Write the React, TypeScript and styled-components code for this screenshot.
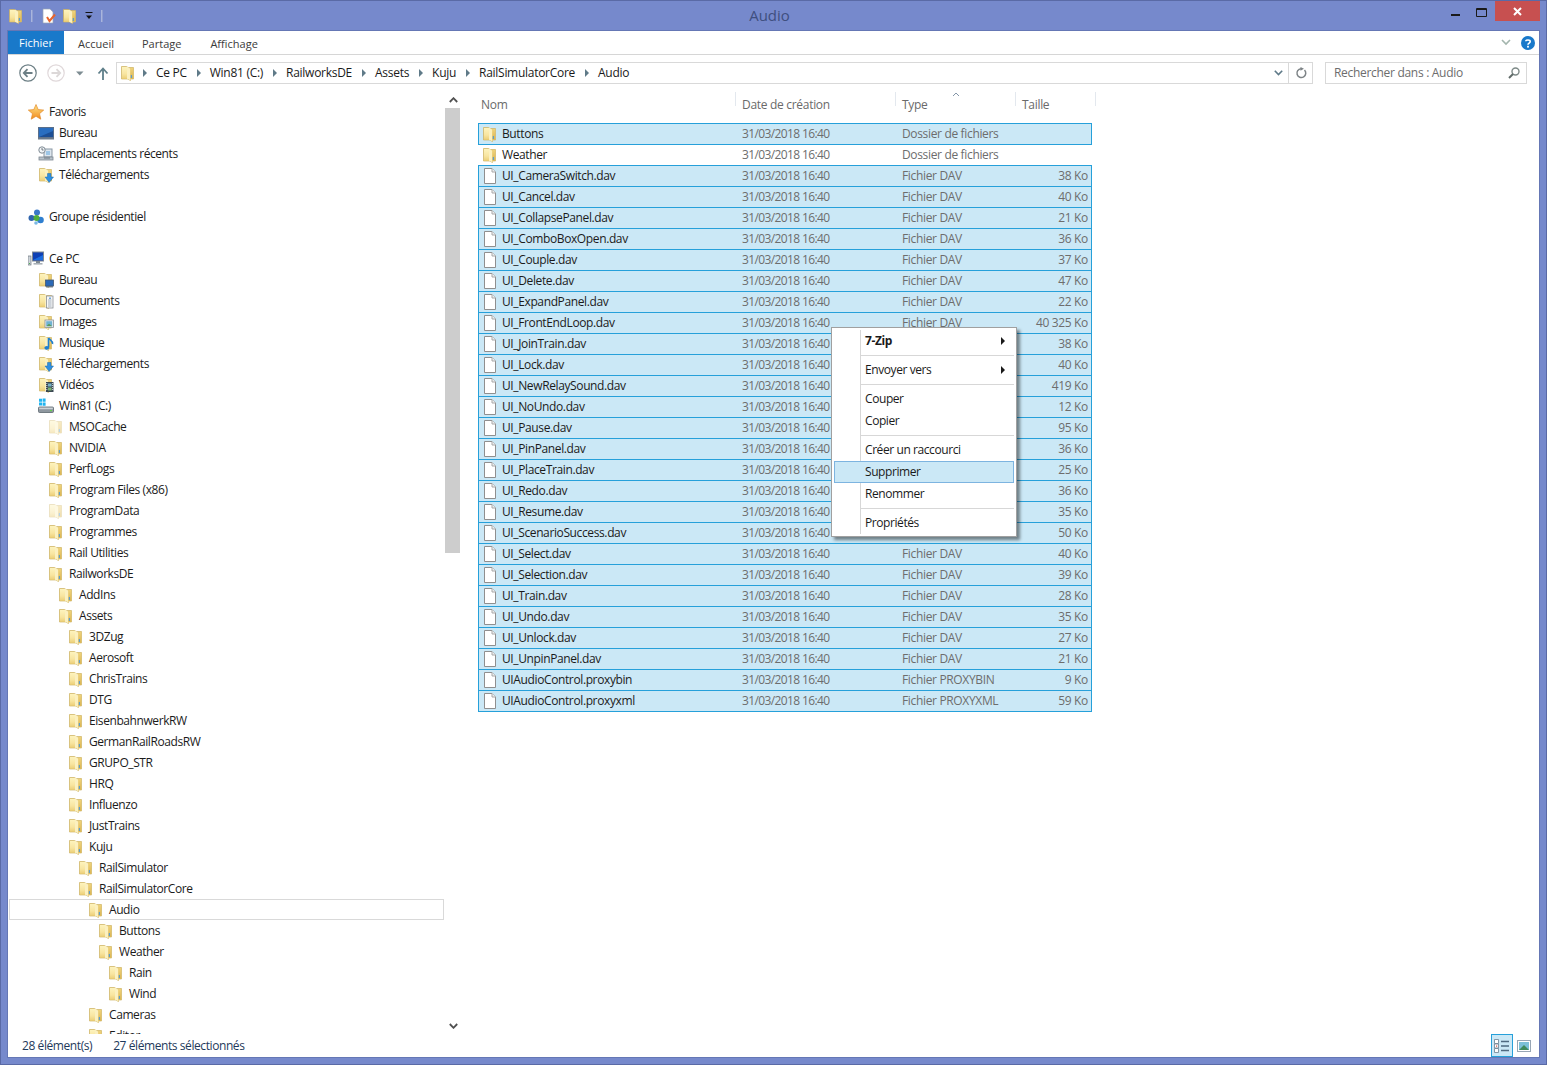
import React from "react";
import styled, { createGlobalStyle } from "styled-components";

const Global = createGlobalStyle`
  html, body { margin: 0; padding: 0; background: #7689cc; }
  body { font-family: "Open Sans", "Noto Sans", "Liberation Sans", sans-serif; font-size: 12px; letter-spacing: -0.42px; }
  * { box-sizing: border-box; }
`;

const Frame = styled.div`
  position: relative; width: 1547px; height: 1065px; background: #7689cc;
  border: 1px solid #5a6aa6; padding: 0 6px 6px; display: flex; flex-direction: column; overflow: hidden;
`;
const TitleBar = styled.div`
  position: relative; height: 29px; flex: none; display: flex; align-items: flex-start; padding-left: 1px;
`;
const Qat = styled.div`display: flex; align-items: center; height: 29px;`;
const QatSep = styled.span<{ $l: number; $r: number }>`
  width: 2px; height: 12px; background: #a9b5dd; border-right: 1px solid #8f9dd0;
  margin: 0 ${p => p.$r}px 0 ${p => p.$l}px;
`;
const QatGap = styled.span`width: 5px;`;
const QatDrop = styled.svg`margin-left: 6px;`;
const TitleText = styled.div`
  position: absolute; left: 0; right: 0; top: 4px; text-align: center; font-size: 15px; line-height: 20px;
  color: #3f4f7f; letter-spacing: 0; transform: translateX(-4px);
`;
const WinButtons = styled.div`
  position: absolute; right: 0; top: 0; display: flex; align-items: flex-start;
`;
const WinBtn = styled.div<{ $w: number; $close?: boolean }>`
  width: ${p => p.$w}px; height: 20px; display: flex; align-items: center; justify-content: center;
  background: ${p => (p.$close ? "#c75050" : "transparent")};
`;
const MinGlyph = styled.svg`margin-top: 7px; margin-right: 1px;`;
const MaxGlyph = styled.svg`margin-top: 2px; margin-right: 2px;`;

const Inner = styled.div`
  flex: 1; min-height: 0; display: flex; flex-direction: column; background: #fff; border: 1px solid #6577b5;
`;
const Ribbon = styled.div`
  height: 24px; flex: none; display: flex; align-items: stretch; border-bottom: 1px solid #d6d6d6; position: relative;
`;
const FileTab = styled.div`
  width: 56px; height: 23px; background: #1979ca; color: #fff; display: flex; align-items: center; justify-content: center;
  font-size: 11px; letter-spacing: 0;
`;
const RibbonTab = styled.div<{ $ml: number }>`
  margin-left: ${p => p.$ml}px; display: flex; align-items: center; color: #3b3b3b; font-size: 11px; letter-spacing: 0; padding-top: 1px;
`;
const RibbonRight = styled.div`
  margin-left: auto; display: flex; align-items: center; gap: 10px; padding-right: 4px; height: 23px;
`;

const AddressRow = styled.div`
  height: 37px; flex: none; display: flex; align-items: flex-start; padding: 7px 12px 0 0;
`;
const Nav = styled.div`
  width: 108px; height: 22px; flex: none; display: flex; align-items: center; padding-left: 11px;
`;
const NavSlot = styled.span<{ $w: number; $ml: number }>`
  width: ${p => p.$w}px; margin-left: ${p => p.$ml}px; display: flex; justify-content: center;
`;
const AddressBox = styled.div`
  flex: 1; height: 22px; border: 1px solid #d9d9d9; display: flex; align-items: center; padding-left: 3px; color: #1a1a1a;
`;
const Crumbs = styled.div`flex: 1; display: flex; align-items: center; min-width: 0; letter-spacing: -0.28px;
  & > svg { margin-right: -3px; }
`;
const Crumb = styled.span`line-height: 20px; white-space: nowrap;`;
const CrumbArrow = styled.span`
  width: 0; height: 0; border-left: 4px solid #5f7a88; border-top: 4px solid transparent; border-bottom: 4px solid transparent;
  margin: 0 9px 0 10px; flex: none;
`;
const AddrChevron = styled.div`width: 19px; height: 20px; display: flex; align-items: center; justify-content: center;`;
const Refresh = styled.div`
  width: 24px; height: 20px; border-left: 1px solid #d9d9d9; display: flex; align-items: center; justify-content: center;
`;
const SearchBox = styled.div`
  width: 202px; height: 22px; margin-left: 12px; border: 1px solid #d9d9d9; display: flex; align-items: center;
  justify-content: space-between; padding: 0 6px 1px 8px; color: #6d6d6d; letter-spacing: -0.3px;
`;

const Main = styled.div`flex: 1; min-height: 0; display: flex;`;
const Sidebar = styled.div`width: 453px; flex: none; display: flex;`;
const Tree = styled.div`
  width: 437px; flex: none; padding: 9px 1px 0; overflow: hidden;
`;
const TreeRow = styled.div<{ $depth: number; $active?: boolean }>`
  height: 21px; display: flex; align-items: center; gap: 5px; padding-left: ${p => 19 + p.$depth * 10}px;
  white-space: nowrap; color: #1b1b1b; border: 1px solid ${p => (p.$active ? "#d9d9d9" : "transparent")};
  & > svg { flex: none; margin-left: -1px; }
`;
const Scrollbar = styled.div`
  width: 16px; flex: none; display: flex; flex-direction: column; align-items: stretch;
`;
const ScrollBtn = styled.div`height: 16px; flex: none; display: flex; align-items: center; justify-content: center;`;
const ScrollThumb = styled.div`height: 445px; flex: none; background: #cdcdcd; width: 15px;`;
const ScrollTrack = styled.div`flex: 1;`;

const ListPane = styled.div`flex: 1; min-width: 0; padding-left: 17px;`;
const Header = styled.div`height: 31px; display: flex; color: #6a6a6a; letter-spacing: -0.3px;`;
const HeaderCell = styled.div<{ $w: number; $pl: number }>`
  position: relative; width: ${p => p.$w}px; padding: 5px 0 0 ${p => p.$pl}px; line-height: 16px;
  &::after { content: ""; position: absolute; right: 0; top: 0; width: 1px; height: 14px; background: #e3e8ee; }
`;
const SortMark = styled.svg`position: absolute; left: 56px; top: 0;`;
const FileRow = styled.div<{ $selected: boolean }>`
  width: 614px; height: 22px; margin-bottom: -1px; display: grid; grid-template-columns: 263px 160px 120px 1fr;
  align-items: center; padding-right: 3px;
  border: 1px solid ${p => (p.$selected ? "#26a0da" : "transparent")};
  background: ${p => (p.$selected ? "#cbe8f6" : "transparent")};
`;
const NameCell = styled.div`
  display: flex; align-items: center; gap: 4px; padding-left: 3px; color: #1b1b1b; white-space: nowrap; letter-spacing: -0.38px;
  & > span { margin-top: -1px; }
`;
const MetaCell = styled.div<{ $right?: boolean; $date?: boolean }>`
  color: #6d6d6d; white-space: nowrap; text-align: ${p => (p.$right ? "right" : "left")}; margin-top: -1px;
  letter-spacing: ${p => (p.$date ? "-0.62px" : "-0.34px")};
`;

const Status = styled.div`
  height: 23px; flex: none; display: flex; align-items: center; padding: 0 8px 0 14px; color: #1e395b;
`;
const StatusText = styled.span<{ $ml?: number }>`margin-left: ${p => p.$ml ?? 0}px;`;
const StatusViews = styled.div`margin-left: auto; display: flex; align-items: stretch; height: 23px; gap: 4px;`;
const ViewBtn = styled.div<{ $on?: boolean }>`
  width: ${p => (p.$on ? 22 : 14)}px; display: flex; align-items: center; justify-content: center;
  border: ${p => (p.$on ? "1px solid #26a0da" : "none")}; background: ${p => (p.$on ? "#cbe8f6" : "transparent")};
`;

const Menu = styled.div`
  position: absolute; left: 830px; top: 326px; width: 186px; height: 210px; background: #fff; border: 1px solid #a0a0a0;
  padding: 2px; box-shadow: 3px 3px 3px rgba(0,0,0,.45); color: #1a1a1a;
  &::before { content: ""; position: absolute; left: 28px; top: 2px; bottom: 2px; width: 1px; background: #d7d7d7; }
`;
const MenuItem = styled.div<{ $hot?: boolean; $bold?: boolean }>`
  height: 22px; display: flex; align-items: center; justify-content: space-between; padding: 0 8px 1px 30px; position: relative;
  border: 1px solid ${p => (p.$hot ? "#7db4e0" : "transparent")};
  background: ${p => (p.$hot ? "#cbe8f6" : "transparent")};
  font-weight: ${p => (p.$bold ? 700 : 400)};
`;
const MenuSep = styled.div`
  height: 7px; margin-left: 27px; display: flex; align-items: center;
  &::after { content: ""; flex: 1; height: 1px; background: #d7d7d7; }
`;
const SubArrow = styled.span`
  width: 0; height: 0; border-left: 4px solid #1a1a1a; border-top: 4px solid transparent; border-bottom: 4px solid transparent;
`;

type Overlay = "desktop" | "doc" | "image" | "music" | "down" | "video" | undefined;

const Folder = ({ overlay, faded }: { overlay?: Overlay; faded?: boolean }) => (
  <svg width="16" height="16" viewBox="0 0 16 16" opacity={faded ? 0.45 : 1}>
    <defs>
      <linearGradient id="fl" x1="0" y1="0" x2="0" y2="1"><stop offset="0" stopColor="#fdf3bd" /><stop offset=".6" stopColor="#f8e5a0" /><stop offset="1" stopColor="#eccf78" /></linearGradient>
      <linearGradient id="fr" x1="0" y1="0" x2="0" y2="1"><stop offset="0" stopColor="#efd27a" /><stop offset="1" stopColor="#dcb654" /></linearGradient>
    </defs>
    <path d="M1.5 1.5 H6.5 L8 2.5 H13.5 V14 H10.5 V15.5 L7.5 14 H1.5Z" fill="#e6c869" stroke="#cfb569" strokeWidth=".7" />
    <path d="M2 2 H7 V13.7 H2Z" fill="url(#fl)" />
    <path d="M7 1.6 L10.4 3.8 V15.2 L7 13.7Z" fill="#fbf0c0" />
    <path d="M10.4 3 H13.2 V13.7 H10.4Z" fill="url(#fr)" />
    {!overlay && <rect x="10.8" y="10" width="1.1" height="3" fill="#4f9bd6" />}
    {overlay === "desktop" && (<><rect x="7.5" y="8" width="8" height="6" fill="#2b69b7" stroke="#45586e" strokeWidth=".8" /><rect x="8" y="14.2" width="7" height="1.2" fill="#59697a" /></>)}
    {overlay === "doc" && (<><rect x="8.5" y="3" width="6.5" height="12" fill="#f7f7f7" stroke="#8a9096" strokeWidth=".8" /><path d="M10 7h3.5M10 9h3.5M10 11h3.5M10 13h3.5" stroke="#8fa0b0" strokeWidth=".8" /><rect x="11" y="4.5" width="2" height="1.5" fill="#6fa8dc" /></>)}
    {overlay === "image" && (<><rect x="7" y="6" width="8.5" height="7.5" fill="#eef1f3" stroke="#8a9096" strokeWidth=".8" /><rect x="8.2" y="7.2" width="6" height="5" fill="#6fb2d2" /><path d="M8.2 12.2 L11 9.8 L14.2 12.2Z" fill="#5c9a58" /></>)}
    {overlay === "music" && (<path d="M10.5 3 V12 M10.5 3 C12 5 15 6 14.5 9" stroke="#1e7fd0" strokeWidth="1.6" fill="none" />)}
    {overlay === "music" && <ellipse cx="8.8" cy="12.8" rx="2.4" ry="1.9" fill="#1e7fd0" />}
    {overlay === "down" && (<path d="M9.5 6.5 H13 V10 H15.5 L11.2 15.5 L7 10 H9.5Z" fill="#2e8fe0" stroke="#1c6aa8" strokeWidth=".5" />)}
    {overlay === "video" && (<><rect x="8" y="5" width="7.5" height="10" fill="#3b4852" /><rect x="10" y="6.5" width="3.6" height="3" fill="#74b0c8" /><rect x="10" y="10.5" width="3.6" height="3" fill="#7cb174" /><path d="M8.8 6v8M14.7 6v8" stroke="#dfe6ea" strokeWidth="1" strokeDasharray="1 1" /></>)}
  </svg>
);

const PageIcon = () => (
  <svg width="16" height="16" viewBox="0 0 16 16">
    <path d="M2.5 .5 H10 L13.5 4 V15.5 H2.5Z" fill="#fff" stroke="#8f8f8f" />
    <path d="M10 .5 V4 H13.5" fill="#f1f1f1" stroke="#a8a8a8" />
  </svg>
);
const Star = () => (
  <svg width="16" height="16" viewBox="0 0 16 16">
    <defs><linearGradient id="st" x1="0" y1="0" x2="0" y2="1"><stop offset="0" stopColor="#ffe58a" /><stop offset="1" stopColor="#f08a1c" /></linearGradient></defs>
    <path d="M8 .5 L10.2 5.6 L15.7 6.1 L11.5 9.7 L12.8 15.2 L8 12.3 L3.2 15.2 L4.5 9.7 L.3 6.1 L5.8 5.6Z" fill="url(#st)" stroke="#e28a2a" strokeWidth=".7" />
  </svg>
);
const DesktopIcon = () => (
  <svg width="16" height="16" viewBox="0 0 16 16">
    <rect x=".5" y="2.5" width="15" height="10" fill="#2a6ec0" stroke="#5a6f8a" />
    <path d="M1 12 L15 6 V12Z" fill="#1d4f95" />
    <rect x="0" y="12.5" width="16" height="2" fill="#6c7a8a" />
  </svg>
);
const RecentIcon = () => (
  <svg width="16" height="16" viewBox="0 0 16 16">
    <rect x="6" y="3" width="8" height="8" fill="#dde6ee" stroke="#8a97a3" />
    <rect x="8" y="5" width="4" height="4" fill="#9ec6e6" />
    <rect x="1" y="11" width="14" height="3" fill="#b9c3cb" stroke="#7d8791" strokeWidth=".8" />
    <circle cx="4" cy="4" r="3.2" fill="#f2f5f7" stroke="#7f8a94" />
    <path d="M4 2v2h1.6" stroke="#55606a" strokeWidth=".8" fill="none" />
    <path d="M6 12h6" stroke="#6f7a85" />
  </svg>
);
const HomeGroup = () => (
  <svg width="16" height="16" viewBox="0 0 16 16">
    <circle cx="9" cy="3.6" r="3" fill="#3a78c8" />
    <circle cx="3.5" cy="9" r="3" fill="#2f64ae" />
    <circle cx="12.5" cy="11" r="3.3" fill="#2f7fd0" />
    <circle cx="8.5" cy="9" r="3" fill="#4fae3c" />
    <circle cx="8" cy="14" r="1.8" fill="#79b7e6" />
  </svg>
);
const PcIcon = () => (
  <svg width="16" height="16" viewBox="0 0 16 16">
    <rect x="0" y="5" width="3" height="9" fill="#cfd5da" stroke="#6e7880" strokeWidth=".7" />
    <rect x="1" y="12" width="1" height="1" fill="#4caf50" />
    <rect x="4.5" y="1" width="11" height="9" fill="#0d3fb5" stroke="#7e8891" />
    <path d="M5 9 L15 4 V9Z" fill="#1a6de0" />
    <rect x="8" y="10" width="4" height="2" fill="#7e8891" />
    <rect x="5.5" y="12" width="9" height="1.6" fill="#a9b1b8" />
  </svg>
);
const DriveIcon = () => (
  <svg width="16" height="16" viewBox="0 0 16 16">
    <path d="M1 .8h3v3H1zM4.6 .4h3v3.4h-3zM1 4.4h3v3H1zM4.6 4.4h3v3.4h-3z" fill="#22b4f0" />
    <rect x=".5" y="9" width="15" height="5.5" rx="1" fill="#8e979f" stroke="#5c666f" strokeWidth=".8" />
    <rect x="1.2" y="9.6" width="13.6" height="1.6" fill="#cdd3d8" />
    <rect x="12" y="12" width="2" height="1.2" fill="#62d04a" />
  </svg>
);

type IconKind = "star" | "desk" | "recent" | "home" | "pc" | "drive" | "hidden" | Overlay;
const treeData: Array<[string, number, IconKind?] | null> = [
  ["Favoris", 0, "star"], ["Bureau", 1, "desk"], ["Emplacements récents", 1, "recent"], ["Téléchargements", 1, "down"], null,
  ["Groupe résidentiel", 0, "home"], null,
  ["Ce PC", 0, "pc"], ["Bureau", 1, "desktop"], ["Documents", 1, "doc"], ["Images", 1, "image"], ["Musique", 1, "music"],
  ["Téléchargements", 1, "down"], ["Vidéos", 1, "video"], ["Win81 (C:)", 1, "drive"],
  ["MSOCache", 2, "hidden"], ["NVIDIA", 2], ["PerfLogs", 2], ["Program Files (x86)", 2], ["ProgramData", 2, "hidden"],
  ["Programmes", 2], ["Rail Utilities", 2], ["RailworksDE", 2], ["AddIns", 3], ["Assets", 3],
  ["3DZug", 4], ["Aerosoft", 4], ["ChrisTrains", 4], ["DTG", 4], ["EisenbahnwerkRW", 4], ["GermanRailRoadsRW", 4],
  ["GRUPO_STR", 4], ["HRQ", 4], ["Influenzo", 4], ["JustTrains", 4], ["Kuju", 4], ["RailSimulator", 5], ["RailSimulatorCore", 5],
  ["Audio", 6], ["Buttons", 7], ["Weather", 7], ["Rain", 8], ["Wind", 8], ["Cameras", 6], ["Editor", 6],
];

const treeIcon = (k: IconKind) => {
  switch (k) {
    case "star": return <Star />;
    case "desk": return <DesktopIcon />;
    case "recent": return <RecentIcon />;
    case "home": return <HomeGroup />;
    case "pc": return <PcIcon />;
    case "drive": return <DriveIcon />;
    case "hidden": return <Folder faded />;
    default: return <Folder overlay={k} />;
  }
};

const files: Array<[string, string, string]> = [
  ["UI_CameraSwitch.dav", "Fichier DAV", "38 Ko"], ["UI_Cancel.dav", "Fichier DAV", "40 Ko"],
  ["UI_CollapsePanel.dav", "Fichier DAV", "21 Ko"], ["UI_ComboBoxOpen.dav", "Fichier DAV", "36 Ko"],
  ["UI_Couple.dav", "Fichier DAV", "37 Ko"], ["UI_Delete.dav", "Fichier DAV", "47 Ko"],
  ["UI_ExpandPanel.dav", "Fichier DAV", "22 Ko"], ["UI_FrontEndLoop.dav", "Fichier DAV", "40 325 Ko"],
  ["UI_JoinTrain.dav", "Fichier DAV", "38 Ko"], ["UI_Lock.dav", "Fichier DAV", "40 Ko"],
  ["UI_NewRelaySound.dav", "Fichier DAV", "419 Ko"], ["UI_NoUndo.dav", "Fichier DAV", "12 Ko"],
  ["UI_Pause.dav", "Fichier DAV", "95 Ko"], ["UI_PinPanel.dav", "Fichier DAV", "36 Ko"],
  ["UI_PlaceTrain.dav", "Fichier DAV", "25 Ko"], ["UI_Redo.dav", "Fichier DAV", "36 Ko"],
  ["UI_Resume.dav", "Fichier DAV", "35 Ko"], ["UI_ScenarioSuccess.dav", "Fichier DAV", "50 Ko"],
  ["UI_Select.dav", "Fichier DAV", "40 Ko"], ["UI_Selection.dav", "Fichier DAV", "39 Ko"],
  ["UI_Train.dav", "Fichier DAV", "28 Ko"], ["UI_Undo.dav", "Fichier DAV", "35 Ko"],
  ["UI_Unlock.dav", "Fichier DAV", "27 Ko"], ["UI_UnpinPanel.dav", "Fichier DAV", "21 Ko"],
  ["UIAudioControl.proxybin", "Fichier PROXYBIN", "9 Ko"], ["UIAudioControl.proxyxml", "Fichier PROXYXML", "59 Ko"],
];
const crumbs = ["Ce PC", "Win81 (C:)", "RailworksDE", "Assets", "Kuju", "RailSimulatorCore", "Audio"];
const DATE = "31/03/2018 16:40";

export default function App() {
  return (
    <Frame>
      <Global />
      <TitleBar>
        <Qat>
          <Folder />
          <QatSep $l={7} $r={8} />
          <svg width="16" height="16" viewBox="0 0 16 16">
            <path d="M2 1 H9 L12 4 V15 H2Z" fill="#fff" stroke="#9aa3b5" strokeWidth=".7" />
            <path d="M6 9 L8.5 13 L14 6.5" stroke="#e8642c" strokeWidth="2" fill="none" />
          </svg>
          <QatGap />
          <Folder />
          <QatDrop width="10" height="10" viewBox="0 0 10 10">
            <path d="M1.5 1.5h7" stroke="#111" /><path d="M2 4.5h6L5 8Z" fill="#111" />
          </QatDrop>
          <QatSep $l={7} $r={0} />
        </Qat>
        <TitleText>Audio</TitleText>
        <WinButtons>
          <WinBtn $w={27}><MinGlyph width="9" height="3" viewBox="0 0 9 3"><rect width="9" height="2" y="1" fill="#1a1a1a" /></MinGlyph></WinBtn>
          <WinBtn $w={26}><MaxGlyph width="11" height="9" viewBox="0 0 11 9"><path d="M.5 .5h10v8H.5z" fill="none" stroke="#1a1a1a" /><path d="M0 1.5h11" stroke="#1a1a1a" /></MaxGlyph></WinBtn>
          <WinBtn $w={45} $close><svg width="9" height="9" viewBox="0 0 9 9"><path d="M1 1 L8 8 M8 1 L1 8" stroke="#fff" strokeWidth="2" /></svg></WinBtn>
        </WinButtons>
      </TitleBar>
      <Inner>
        <Ribbon>
          <FileTab>Fichier</FileTab>
          <RibbonTab $ml={14}>Accueil</RibbonTab>
          <RibbonTab $ml={28}>Partage</RibbonTab>
          <RibbonTab $ml={29}>Affichage</RibbonTab>
          <RibbonRight>
            <svg width="10" height="7" viewBox="0 0 10 7"><path d="M1 1 L5 5 L9 1" fill="none" stroke="#a3b5ad" strokeWidth="1.6" /></svg>
            <svg width="14" height="14" viewBox="0 0 14 14">
              <circle cx="7" cy="7" r="7" fill="#1979ca" />
              <path d="M4.8 5.3 C4.8 3.6 9.2 3.4 9.2 5.6 C9.2 7.2 7 7 7 8.8" fill="none" stroke="#fff" strokeWidth="1.6" />
              <rect x="6.1" y="9.8" width="1.8" height="1.8" fill="#fff" />
            </svg>
          </RibbonRight>
        </Ribbon>
        <AddressRow>
          <Nav>
            <NavSlot $w={18} $ml={0}>
              <svg width="18" height="18" viewBox="0 0 18 18"><circle cx="9" cy="9" r="8.2" fill="#fff" stroke="#6c7f85" strokeWidth="1.2" /><path d="M13.5 9H5M8.5 5.2 L4.8 9 L8.5 12.8" fill="none" stroke="#6c7f85" strokeWidth="1.8" /></svg>
            </NavSlot>
            <NavSlot $w={18} $ml={10}>
              <svg width="18" height="18" viewBox="0 0 18 18"><circle cx="9" cy="9" r="8.2" fill="#fff" stroke="#e0d8da" strokeWidth="1.2" /><path d="M4.5 9H13M9.5 5.2 L13.2 9 L9.5 12.8" fill="none" stroke="#dcd8d8" strokeWidth="1.8" /></svg>
            </NavSlot>
            <NavSlot $w={14} $ml={8}>
              <svg width="8" height="5" viewBox="0 0 8 5"><path d="M0 .5h7.5L3.8 4.5Z" fill="#7d8c92" /></svg>
            </NavSlot>
            <NavSlot $w={14} $ml={9}>
              <svg width="12" height="13" viewBox="0 0 12 13"><path d="M6 13V2M1.5 6.5 L6 1.5 L10.5 6.5" fill="none" stroke="#5f7f8a" strokeWidth="1.8" /></svg>
            </NavSlot>
          </Nav>
          <AddressBox>
            <Crumbs>
              <Folder />
              {crumbs.map(c => (
                <React.Fragment key={c}>
                  <CrumbArrow />
                  <Crumb>{c}</Crumb>
                </React.Fragment>
              ))}
            </Crumbs>
            <AddrChevron>
              <svg width="9" height="6" viewBox="0 0 9 6"><path d="M.8 .8 L4.5 4.6 L8.2 .8" fill="none" stroke="#5f7a88" strokeWidth="1.6" /></svg>
            </AddrChevron>
            <Refresh>
              <svg width="12" height="12" viewBox="0 0 12 12"><path d="M9.5 3 A4.4 4.4 0 1 1 6 1.7" fill="none" stroke="#7d8386" strokeWidth="1.5" /><path d="M5.5 0 L9 1.8 L5.5 3.8Z" fill="#7d8386" /></svg>
            </Refresh>
          </AddressBox>
          <SearchBox>
            <span>Rechercher dans : Audio</span>
            <svg width="12" height="12" viewBox="0 0 12 12"><circle cx="7.5" cy="4.5" r="3.5" fill="none" stroke="#7e8a88" strokeWidth="1.4" /><path d="M5 7 L1 11" stroke="#5f6a68" strokeWidth="2" /></svg>
          </SearchBox>
        </AddressRow>
        <Main>
          <Sidebar>
            <Tree>
              {treeData.map((t, i) =>
                t ? (
                  <TreeRow key={i} $depth={t[1]} $active={i === 38}>
                    {treeIcon(t[2])}
                    <span>{t[0]}</span>
                  </TreeRow>
                ) : (
                  <TreeRow key={i} $depth={0} />
                )
              )}
            </Tree>
            <Scrollbar>
              <ScrollBtn><svg width="9" height="6" viewBox="0 0 9 6"><path d="M.8 5 L4.5 1.2 L8.2 5" fill="none" stroke="#505050" strokeWidth="1.8" /></svg></ScrollBtn>
              <ScrollThumb />
              <ScrollTrack />
              <ScrollBtn><svg width="9" height="6" viewBox="0 0 9 6"><path d="M.8 1 L4.5 4.8 L8.2 1" fill="none" stroke="#505050" strokeWidth="1.8" /></svg></ScrollBtn>
            </Scrollbar>
          </Sidebar>
          <ListPane>
            <Header>
              <HeaderCell $w={258} $pl={3}>Nom</HeaderCell>
              <HeaderCell $w={160} $pl={6}>Date de création</HeaderCell>
              <HeaderCell $w={120} $pl={6}>
                Type
                <SortMark width="8" height="5" viewBox="0 0 8 5"><path d="M1 4 L4 1 L7 4" fill="none" stroke="#8496a8" /></SortMark>
              </HeaderCell>
              <HeaderCell $w={80} $pl={6}>Taille</HeaderCell>
            </Header>
            <FileRow $selected>
              <NameCell><Folder /><span>Buttons</span></NameCell>
              <MetaCell $date>{DATE}</MetaCell>
              <MetaCell>Dossier de fichiers</MetaCell>
              <MetaCell $right />
            </FileRow>
            <FileRow $selected={false}>
              <NameCell><Folder /><span>Weather</span></NameCell>
              <MetaCell $date>{DATE}</MetaCell>
              <MetaCell>Dossier de fichiers</MetaCell>
              <MetaCell $right />
            </FileRow>
            {files.map(f => (
              <FileRow $selected key={f[0]}>
                <NameCell><PageIcon /><span>{f[0]}</span></NameCell>
                <MetaCell $date>{DATE}</MetaCell>
                <MetaCell>{f[1]}</MetaCell>
                <MetaCell $right>{f[2]}</MetaCell>
              </FileRow>
            ))}
          </ListPane>
        </Main>
        <Status>
          <StatusText>28 élément(s)</StatusText>
          <StatusText $ml={21}>27 éléments sélectionnés</StatusText>
          <StatusViews>
            <ViewBtn $on>
              <svg width="16" height="14" viewBox="0 0 16 14">
                <path d="M.5 .5h4v4h-4zM.5 5h4v4h-4zM.5 9.5h4v4h-4z" fill="#fff" stroke="#6a7f90" strokeWidth=".8" />
                <rect x="2" y="6.5" width="1.2" height="1.2" fill="#d04a3a" />
                <path d="M7 2.5h8M7 7h8M7 11.5h8" stroke="#4f6a80" strokeWidth="1.3" />
              </svg>
            </ViewBtn>
            <ViewBtn>
              <svg width="14" height="12" viewBox="0 0 14 12">
                <rect x=".5" y=".5" width="13" height="11" fill="#fff" stroke="#98a6b5" />
                <rect x="2" y="2" width="10" height="8" fill="#7cc0d8" />
                <path d="M2 10 L7 5 L12 10Z" fill="#3f8a5c" />
              </svg>
            </ViewBtn>
          </StatusViews>
        </Status>
      </Inner>
      <Menu>
        <MenuItem $bold>7-Zip<SubArrow /></MenuItem>
        <MenuSep />
        <MenuItem>Envoyer vers<SubArrow /></MenuItem>
        <MenuSep />
        <MenuItem>Couper</MenuItem>
        <MenuItem>Copier</MenuItem>
        <MenuSep />
        <MenuItem>Créer un raccourci</MenuItem>
        <MenuItem $hot>Supprimer</MenuItem>
        <MenuItem>Renommer</MenuItem>
        <MenuSep />
        <MenuItem>Propriétés</MenuItem>
      </Menu>
    </Frame>
  );
}
